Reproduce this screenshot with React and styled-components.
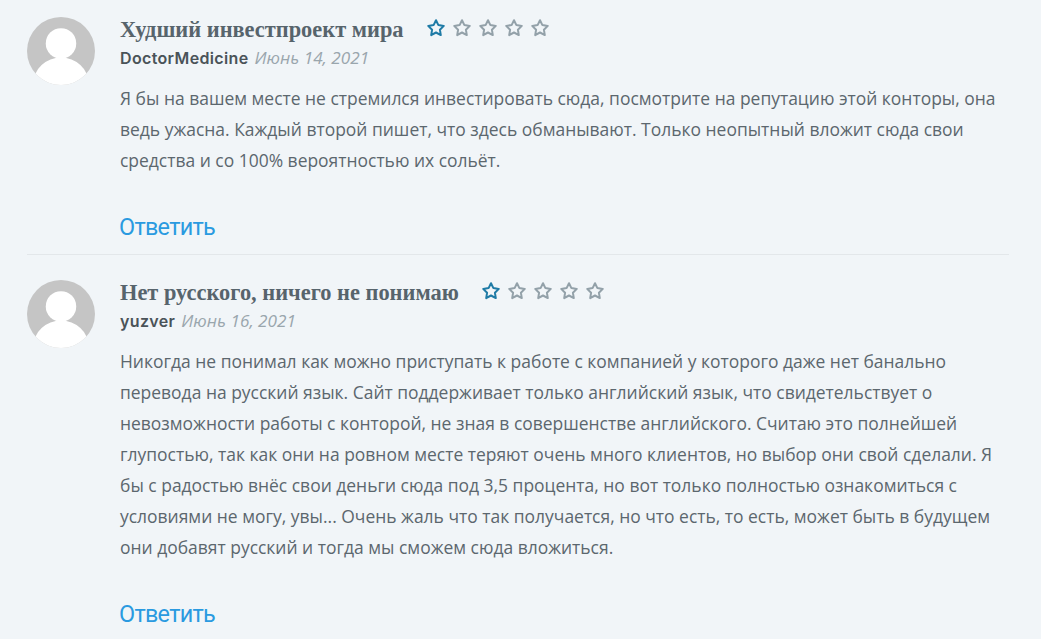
import React from 'react'
import styled, { createGlobalStyle } from 'styled-components'

const GlobalStyle = createGlobalStyle`
  html, body {
    margin: 0;
    padding: 0;
    background: #f1f5f8;
    overflow: hidden;
  }
`

const CommentList = styled.div`
  width: 982px;
  margin-left: 27px;
  padding-top: 17px;
`

const Comment = styled.article`
  display: flex;
  gap: 25px;
  padding-bottom: ${(p) => (p.$last ? '0' : '10px')};
  margin-bottom: ${(p) => (p.$last ? '0' : '25px')};
  border-bottom: ${(p) => (p.$last ? 'none' : '1px solid #e3e7ea')};
`

const Avatar = styled.svg`
  flex: none;
  width: 68px;
  height: 68px;
  border-radius: 50%;
  display: block;
`

const Body = styled.div`
  flex: 1;
  min-width: 0;
`

const TitleRow = styled.div`
  display: flex;
  align-items: center;
  gap: 22px;
  height: 26px;
`

const Title = styled.h3`
  margin: 0;
  font-family: 'Liberation Serif', serif;
  font-size: 22.4px;
  font-weight: 700;
  line-height: 26px;
  color: #57646c;
`

const Stars = styled.div`
  display: flex;
  gap: 6px;
  margin-top: -4px;
`

const Star = styled.svg`
  width: 20px;
  height: 20px;
  fill: none;
  stroke: ${(p) => (p.$active ? '#1f7ba6' : '#93a1a9')};
  stroke-width: 2;
  stroke-linejoin: round;
`

const Meta = styled.div`
  display: flex;
  align-items: baseline;
  gap: 6px;
  margin-top: 3px;
  height: 24px;
  line-height: 24px;
`

const Author = styled.span`
  font-family: Inter, sans-serif;
  font-size: 16px;
  font-weight: 600;
  letter-spacing: 0.35px;
  color: #4a5358;
`

const Date = styled.span`
  font-family: 'Open Sans', sans-serif;
  font-size: 17.2px;
  font-style: italic;
  color: #9aa6ad;
`

const Text = styled.p`
  margin: 13px 0 0;
  font-family: 'Open Sans', sans-serif;
  font-size: 17.47px;
  line-height: 31px;
  color: #5c676e;
`

const Reply = styled.a`
  display: block;
  margin: 34px 0 0 -1px;
  font-family: Roboto, sans-serif;
  font-size: 23.4px;
  letter-spacing: -0.7px;
  line-height: 34px;
  color: #2a9ae0;
  text-decoration: none;
`

const AvatarImage = () => (
  <Avatar viewBox="0 0 67 67">
    <rect width="67" height="67" fill="#c5c5c5" />
    <circle cx="33.5" cy="26" r="15" fill="#fff" />
    <ellipse cx="33.5" cy="65" rx="27" ry="25" fill="#fff" />
  </Avatar>
)

const StarIcon = ({ active }) => (
  <Star viewBox="0 0 20 20" $active={active}>
    <path d="M10 2.2l2.4 4.9 5.4.8-3.9 3.8.9 5.4-4.8-2.6-4.8 2.6.9-5.4-3.9-3.8 5.4-.8z" />
  </Star>
)

const comments = [
  {
    title: 'Худший инвестпроект мира',
    author: 'DoctorMedicine',
    date: 'Июнь 14, 2021',
    lines: [
      'Я бы на вашем месте не стремился инвестировать сюда, посмотрите на репутацию этой конторы, она',
      'ведь ужасна. Каждый второй пишет, что здесь обманывают. Только неопытный вложит сюда свои',
      'средства и со 100% вероятностью их сольёт.',
    ],
  },
  {
    title: 'Нет русского, ничего не понимаю',
    author: 'yuzver',
    date: 'Июнь 16, 2021',
    lines: [
      'Никогда не понимал как можно приступать к работе с компанией у которого даже нет банально',
      'перевода на русский язык. Сайт поддерживает только английский язык, что свидетельствует о',
      'невозможности работы с конторой, не зная в совершенстве английского. Считаю это полнейшей',
      'глупостью, так как они на ровном месте теряют очень много клиентов, но выбор они свой сделали. Я',
      'бы с радостью внёс свои деньги сюда под 3,5 процента, но вот только полностью ознакомиться с',
      'условиями не могу, увы... Очень жаль что так получается, но что есть, то есть, может быть в будущем',
      'они добавят русский и тогда мы сможем сюда вложиться.',
    ],
  },
]

export default function App() {
  return (
    <CommentList>
      <GlobalStyle />
      {comments.map((c, i) => (
        <Comment key={c.author} $last={i === comments.length - 1}>
          <AvatarImage />
          <Body>
            <TitleRow>
              <Title>{c.title}</Title>
              <Stars>
                {[0, 1, 2, 3, 4].map((n) => (
                  <StarIcon key={n} active={n === 0} />
                ))}
              </Stars>
            </TitleRow>
            <Meta>
              <Author>{c.author}</Author>
              <Date>{c.date}</Date>
            </Meta>
            <Text>
              {c.lines.map((line) => (
                <React.Fragment key={line}>
                  {line}
                  <br />
                </React.Fragment>
              ))}
            </Text>
            <Reply href="#">Ответить</Reply>
          </Body>
        </Comment>
      ))}
    </CommentList>
  )
}
